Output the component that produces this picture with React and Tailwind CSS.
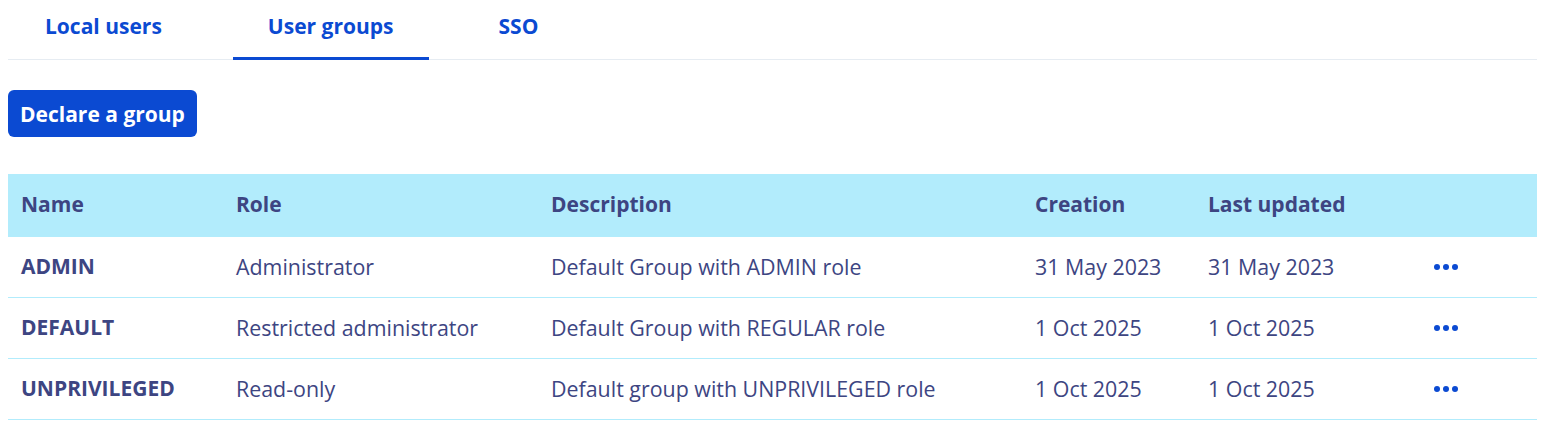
import React from "react";

const rows = [
  { name: "ADMIN", role: "Administrator", desc: "Default Group with ADMIN role", created: "31 May 2023", updated: "31 May 2023" },
  { name: "DEFAULT", role: "Restricted administrator", desc: "Default Group with REGULAR role", created: "1 Oct 2025", updated: "1 Oct 2025" },
  { name: "UNPRIVILEGED", role: "Read-only", desc: "Default group with UNPRIVILEGED role", created: "1 Oct 2025", updated: "1 Oct 2025" },
];

function Dots() {
  return (
    <div className="flex items-center gap-[3px] w-[26px] ml-[1px]">
      <span className="block w-[6px] h-[6px] rounded-full bg-[#0b4ad2]" />
      <span className="block w-[6px] h-[6px] rounded-full bg-[#0b4ad2]" />
      <span className="block w-[6px] h-[6px] rounded-full bg-[#0b4ad2]" />
    </div>
  );
}

export default function App() {
  return (
    <div className="w-[1548px] h-[428px] bg-white pl-[8px] pr-[11px] text-[#3d4582]" style={{ fontFamily: "'Open Sans', Lato, sans-serif" }}>
      <div className="flex gap-[35px] border-b border-[#e6ecf2] h-[60px]">
        {["Local users", "User groups", "SSO"].map((t, i) => (
          <div key={t} className={`${i === 0 ? "pl-[37px] pr-[36px]" : "px-[35px]"} h-[60px] pt-[12px] leading-[29px] text-[21px] font-bold text-[#0b4ad2] ${i === 1 ? "border-b-[3px] border-[#0b4ad2]" : ""}`}>
            {t}
          </div>
        ))}
      </div>
      <div className="pt-[30px]">
        <button className="h-[47px] px-[12px] rounded-[6px] bg-[#0b4ad2] text-white text-[21px] font-bold leading-[28px]">
          Declare a group
        </button>
      </div>
      <div className="mt-[37px]">
        <div className="grid grid-cols-[215px_315px_484px_173px_225px_1fr] items-center h-[63px] bg-[#b2ecfc] px-[13px] pb-[1px] text-[21px] font-bold">
          <div>Name</div>
          <div>Role</div>
          <div>Description</div>
          <div>Creation</div>
          <div>Last updated</div>
          <div></div>
        </div>
        {rows.map((r) => (
          <div key={r.name} className="grid grid-cols-[215px_315px_484px_173px_225px_1fr] items-center h-[61px] border-b border-[#b2ecfc] px-[13px] text-[21.4px]">
            <div className="font-bold text-[21px]">{r.name}</div>
            <div>{r.role}</div>
            <div>{r.desc}</div>
            <div>{r.created}</div>
            <div>{r.updated}</div>
            <div><Dots /></div>
          </div>
        ))}
      </div>
    </div>
  );
}
